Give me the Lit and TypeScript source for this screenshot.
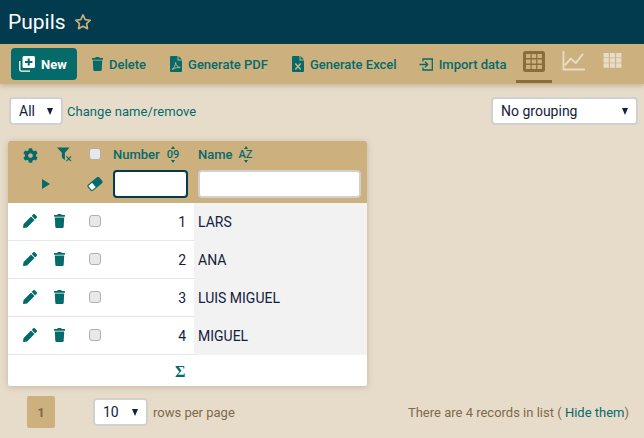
import { LitElement, css, html, svg } from 'lit';
import { customElement, state } from 'lit/decorators.js';

const trash = svg`<path d="M432 32H312l-9.4-18.7A24 24 0 0 0 281.1 0H166.8a23.72 23.72 0 0 0-21.4 13.3L136 32H16A16 16 0 0 0 0 48v32a16 16 0 0 0 16 16h416a16 16 0 0 0 16-16V48a16 16 0 0 0-16-16zM53.2 467a48 48 0 0 0 47.9 45h245.8a48 48 0 0 0 47.9-45L416 128H32z"/>`;
const pencil = svg`<path d="M497.9 142.1l-46.1 46.1c-4.7 4.7-12.3 4.7-17 0l-111-111c-4.7-4.7-4.7-12.3 0-17l46.1-46.1c18.7-18.7 49.1-18.7 67.9 0l60.1 60.1c18.8 18.7 18.8 49.1 0 67.9zM284.2 99.8L21.6 362.4.4 483.9c-2.9 16.4 11.4 30.6 27.8 27.8l121.5-21.3 262.6-262.6c4.7-4.7 4.7-12.3 0-17l-111-111c-4.8-4.7-12.4-4.7-17.1 0z"/>`;
const cog = svg`<path d="M487.4 315.7l-42.6-24.6c4.3-23.2 4.3-47 0-70.2l42.6-24.6c4.9-2.8 7.1-8.6 5.5-14-11.1-35.6-30-67.8-54.7-94.6-3.8-4.1-10-5.1-14.8-2.3L380.8 110c-17.9-15.4-38.5-27.3-60.8-35.1V25.8c0-5.6-3.9-10.5-9.4-11.7-36.7-8.2-74.3-7.8-109.2 0-5.5 1.2-9.4 6.1-9.4 11.7V75c-22.2 7.9-42.8 19.8-60.8 35.1L88.7 85.5c-4.9-2.8-11-1.9-14.8 2.3-24.7 26.7-43.6 58.9-54.7 94.6-1.7 5.4.6 11.2 5.5 14L67.3 221c-4.3 23.2-4.3 47 0 70.2l-42.6 24.6c-4.9 2.8-7.1 8.6-5.5 14 11.1 35.6 30 67.8 54.7 94.6 3.8 4.1 10 5.1 14.8 2.3l42.6-24.6c17.9 15.4 38.5 27.3 60.8 35.1v49.2c0 5.6 3.9 10.5 9.4 11.7 36.7 8.2 74.3 7.8 109.2 0 5.5-1.2 9.4-6.1 9.4-11.7v-49.2c22.2-7.9 42.8-19.8 60.8-35.1l42.6 24.6c4.9 2.8 11 1.9 14.8-2.3 24.7-26.7 43.6-58.9 54.7-94.6 1.5-5.5-.7-11.3-5.6-14.1zM256 336c-44.1 0-80-35.9-80-80s35.9-80 80-80 80 35.9 80 80-35.9 80-80 80z"/>`;

@customElement('app-root')
export class AppRoot extends LitElement {
  @state()
  pupils = ['LARS', 'ANA', 'LUIS MIGUEL', 'MIGUEL'];

  render() {
    return html`
      <header class="c-title">
        <h1>Pupils</h1>
        <svg class="c-star" width="18" height="18" viewBox="0 0 24 24">
          <path d="M12 2.6l2.900 6.200 6.800.8-5 4.600 1.300 6.700-6-3.300-6 3.300 1.300-6.700-5-4.600 6.800-.8z" fill="none" stroke="currentColor" stroke-width="2.200" stroke-linejoin="round"/>
        </svg>
      </header>

      <nav class="c-toolbar">
        <button class="c-new">
          <svg width="16" height="16" viewBox="0 0 16 16">
            <path d="M.8 5v8.500a1.700 1.700 0 0 0 1.700 1.700H11" fill="none" stroke="#fff" stroke-width="1.300"/>
            <path fill-rule="evenodd" fill="#fff" d="M5 0h9.500A1.500 1.500 0 0 1 16 1.500v9a1.500 1.500 0 0 1-1.500 1.500H5a1.500 1.500 0 0 1-1.500-1.500v-9A1.500 1.500 0 0 1 5 0zm3.700 2.500v2.600H6v1.800h2.700v2.600h2V6.900h2.700V5.100h-2.700V2.500z"/>
          </svg>
          New
        </button>
        <a class="c-tool c-tool--delete">
          <svg width="11" height="14" viewBox="0 0 448 512" preserveAspectRatio="none" fill="currentColor">${trash}</svg>
          Delete
        </a>
        <a class="c-tool c-tool--pdf">
          <svg width="12" height="16" viewBox="0 0 12 16">
            <path fill="currentColor" d="M1 0h6.500v4.500H12V15a1 1 0 0 1-1 1H1a1 1 0 0 1-1-1V1a1 1 0 0 1 1-1zM8.500 0L12 3.500H8.500z"/>
            <path fill="none" stroke="#ccb17f" stroke-width="1" d="M2 13.500c2-1 3.500-4 3.600-7 .6 3 2 4.500 4.600 5-2.500-.2-5 .3-8.200 2z"/>
          </svg>
          Generate PDF
        </a>
        <a class="c-tool c-tool--excel">
          <svg width="12" height="16" viewBox="0 0 12 16">
            <path fill="currentColor" d="M1 0h6.500v4.500H12V15a1 1 0 0 1-1 1H1a1 1 0 0 1-1-1V1a1 1 0 0 1 1-1zM8.500 0L12 3.500H8.500z"/>
            <path fill="none" stroke="#ccb17f" stroke-width="1.500" d="M3.300 7.500l5.400 6M8.700 7.500l-5.400 6"/>
          </svg>
          Generate Excel
        </a>
        <a class="c-tool c-tool--import">
          <svg width="14" height="13" viewBox="0 0 14 13" fill="none" stroke="currentColor" stroke-width="1.300">
            <path d="M4 3.500V1h9.300v11H4V9.500M.5 6.500h8M6 3.800l2.700 2.700L6 9.200"/>
          </svg>
          Import data
        </a>
        <div class="c-views">
          <div class="c-view c-view--active">
            <svg width="22" height="21" viewBox="0 0 22 21">
              <rect width="22" height="21" rx="2.500" fill="#8a6d3b"/>
              <g fill="#ccb17f">
                ${[3, 8.5, 14].flatMap((y) => [3, 8.700, 14.400].map((x) => svg`<rect x=${x} y=${y} width="4.500" height="4"/>`))}
              </g>
            </svg>
          </div>
          <div class="c-view c-view--chart">
            <svg width="23" height="20" viewBox="0 0 24 21" fill="none" stroke="#e7dcca" stroke-width="2">
              <path d="M1.500 0v19.500H24"/>
              <path d="M3 15l6-7 5.500 4.500L22 3"/>
            </svg>
          </div>
          <div class="c-view c-view--pivot">
            <svg width="19" height="15" viewBox="0 0 19 16" fill="#e7dcca">
              ${[0, 5.500, 11].flatMap((y) => [0, 6.700, 13.400].map((x) => svg`<rect x=${x} y=${y} width="5.600" height="4.800"/>`))}
            </svg>
          </div>
        </div>
      </nav>

      <section class="c-filters">
        <div class="c-select c-select--all">All<i class="c-caret"></i></div>
        <a class="c-change">Change name/remove</a>
        <div class="c-select c-select--group">No grouping<i class="c-caret"></i></div>
      </section>

      <div class="c-table">
        <div class="c-head">
          <span class="c-icon c-icon--gear">
            <svg width="15" height="15" viewBox="0 0 512 512" fill="currentColor">${cog}</svg>
          </span>
          <span class="c-icon c-icon--filter">
            <svg width="16" height="15" viewBox="0 0 16 15">
              <path fill="currentColor" d="M0 0h13.500L8.400 5.500V13.500L5.200 10.800V5.500z"/>
              <path fill="none" stroke="currentColor" stroke-width="1.200" d="M10 9.500l5 5M15 9.500l-5 5"/>
            </svg>
          </span>
          <span class="c-check c-check--head"></span>
          <span class="c-label">Number <span class="c-sort"><i class="c-up"></i>09<i class="c-down"></i></span></span>
          <span class="c-label c-label--name">Name <span class="c-sort"><i class="c-up"></i>AZ<i class="c-down"></i></span></span>

          <span class="c-icon c-icon--play"><i class="c-play"></i></span>
          <span></span>
          <span class="c-icon c-icon--eraser">
            <svg width="16" height="14" viewBox="0 0 16 14">
              <g transform="rotate(-40 8 7)">
                <rect x="1" y="3.600" width="14" height="6.800" rx="1.500" fill="#fff" stroke="currentColor" stroke-width="1.200"/>
                <path fill="currentColor" d="M6.500 3.600h7a1.500 1.500 0 0 1 1.500 1.500v3.800a1.500 1.500 0 0 1-1.500 1.500h-7z"/>
              </g>
            </svg>
          </span>
          <input class="c-input c-input--focus" />
          <input class="c-input" />
        </div>

        ${this.pupils.map((name, index) => html`
          <div class="c-row">
            <span class="c-icon c-icon--pencil">
              <svg width="14" height="14" viewBox="0 0 512 512" fill="currentColor">${pencil}</svg>
            </span>
            <span class="c-icon c-icon--trash">
              <svg width="11" height="14" viewBox="0 0 448 512" preserveAspectRatio="none" fill="currentColor">${trash}</svg>
            </span>
            <span class="c-check"></span>
            <span class="c-num">${index + 1}</span>
            <span class="c-name">${name}</span>
          </div>
        `)}

        <div class="c-sum">Σ</div>
      </div>

      <footer class="c-footer">
        <span class="c-page">1</span>
        <div class="c-select c-select--size">10<i class="c-caret"></i></div>
        <span class="c-rows">rows per page</span>
        <span class="c-count">There are 4 records in list ( <a>Hide them</a>)</span>
      </footer>
    `;
  }

  static styles = css`
    :host {
      display: block;
      width: 644px;
      height: 438px;
      overflow: hidden;
      background: #e7dcca;
      font-family: Roboto, "Liberation Sans", sans-serif;
      font-size: 14px;
      color: #14213d;
    }

    a {
      color: #056a6a;
    }

    .c-title {
      display: flex;
      align-items: center;
      height: 44px;
      padding-left: 8px;
      background: #023a4e;
      color: #fff;
      box-sizing: border-box;
    }

    .c-title h1 {
      margin: 0;
      width: 56px;
      font-size: 21px;
      font-weight: 400;
      line-height: 44px;
      white-space: nowrap;
    }

    .c-star {
      margin-left: 10px;
      color: #ccb17f;
    }

    .c-toolbar {
      display: flex;
      align-items: center;
      height: 40px;
      background: #ccb17f;
      box-shadow: 0 2px 5px rgba(120, 100, 70, 0.35);
      position: relative;
    }

    .c-new {
      display: flex;
      align-items: center;
      gap: 6px;
      width: 66px;
      height: 32px;
      margin-left: 11px;
      padding: 0 0 0 8px;
      border: 0;
      border-radius: 4px;
      background: #056a6a;
      color: #fff;
      font: 700 13px Roboto, sans-serif;
    }

    .c-tool {
      display: flex;
      align-items: center;
      gap: 6px;
      font-size: 13px;
      font-weight: 500;
      white-space: nowrap;
    }

    .c-tool--delete { margin-left: 15px; }
    .c-tool--pdf { margin-left: 24px; }
    .c-tool--excel { margin-left: 24px; }
    .c-tool--import { margin-left: 22px; }

    .c-views {
      display: flex;
      align-items: flex-start;
      margin-left: 10px;
      height: 40px;
    }

    .c-view {
      display: flex;
      justify-content: center;
      box-sizing: border-box;
      width: 36px;
      height: 39px;
      padding-top: 7px;
    }

    .c-view--active {
      border-bottom: 3px solid #8a6d3b;
    }

    .c-view--chart {
      margin-left: 9px;
      width: 24px;
    }

    .c-view--pivot {
      margin-left: 18px;
      width: 19px;
      padding-top: 9px;
    }

    .c-filters {
      display: flex;
      align-items: center;
      padding: 13px 6px 0 9px;
    }

    .c-select {
      display: flex;
      align-items: center;
      justify-content: space-between;
      box-sizing: border-box;
      height: 28px;
      padding: 0 8px 0 8px;
      background: #fff;
      border: 2px solid #d0d0d0;
      border-radius: 4px;
      font-size: 14px;
    }

    .c-select--all { width: 54px; }
    .c-select--group { width: 147px; margin-left: auto; }
    .c-select--size { width: 55px; }

    .c-caret {
      width: 0;
      height: 0;
      border-left: 3.500px solid transparent;
      border-right: 3.500px solid transparent;
      border-top: 7px solid #14213d;
    }

    .c-change {
      margin-left: 4px;
      font-size: 13px;
      letter-spacing: 0.06px;
    }

    .c-table {
      width: 359px;
      margin: 16px 0 0 8px;
      background: #fff;
      border-radius: 2px;
      box-shadow: 0 1px 6px rgba(120, 100, 70, 0.3);
    }

    .c-head,
    .c-row {
      display: grid;
      grid-template-columns: 38px 26px 40px 82px 1fr;
      align-items: center;
    }

    .c-head {
      grid-template-rows: 29px 28px;
      height: 62px;
      box-sizing: border-box;
      background: #ccb17f;
      border-radius: 2px 2px 0 0;
      align-content: start;
    }

    .c-icon {
      display: flex;
      justify-content: center;
      color: #056a6a;
    }

    .c-icon svg {
      display: block;
    }

    .c-icon--gear { padding: 0 0 1px 6px; }
    .c-icon--filter { padding: 0 0 3px 11px; }
    .c-icon--pencil { padding: 0 0 3px 6px; }
    .c-icon--trash { padding-bottom: 3px; }
    .c-icon--play { justify-content: flex-end; margin-right: -4px; }
    .c-icon--eraser { padding-left: 6px; }

    .c-play {
      width: 0;
      height: 0;
      border-top: 5px solid transparent;
      border-bottom: 5px solid transparent;
      border-left: 8px solid #056a6a;
    }

    .c-check {
      justify-self: center;
      box-sizing: border-box;
      width: 12px;
      height: 12px;
      margin: 0 0 3px 6px;
      background: #e8e8e8;
      border: 1px solid #b0b0b0;
      border-radius: 3px;
    }

    .c-label {
      display: flex;
      align-items: center;
      gap: 7px;
      padding: 0 0 2px 1px;
      color: #056a6a;
      font-size: 13px;
      font-weight: 500;
      white-space: nowrap;
    }

    .c-label--name {
      padding-left: 4px;
      gap: 6px;
    }

    .c-sort {
      display: flex;
      flex-direction: column;
      align-items: center;
      font-size: 11px;
      line-height: 9px;
    }

    .c-up,
    .c-down {
      width: 0;
      height: 0;
      border-left: 2.500px solid transparent;
      border-right: 2.500px solid transparent;
    }

    .c-up {
      border-bottom: 3px solid #056a6a;
      margin-bottom: 1px;
    }

    .c-down {
      border-top: 3px solid #056a6a;
      margin-top: 1px;
    }

    .c-input {
      box-sizing: border-box;
      height: 28px;
      width: 163px;
      margin-left: 4px;
      padding: 0;
      background: #fff;
      border: 2px solid #d0d0d0;
      border-radius: 4px;
      outline: 0;
    }

    .c-input--focus {
      width: 75px;
      margin-left: 1px;
      border-color: #023a4e;
    }

    .c-row {
      height: 38px;
      box-sizing: border-box;
      border-bottom: 1px solid #e6e6e6;
    }

    .c-num {
      align-self: stretch;
      line-height: 38px;
      padding-right: 8px;
      text-align: right;
    }

    .c-name {
      align-self: stretch;
      line-height: 38px;
      padding-left: 4px;
      background: #f2f2f2;
    }

    .c-sum {
      height: 31px;
      box-sizing: border-box;
      padding-left: 167px;
      color: #056a6a;
      font-family: "Liberation Serif", serif;
      font-size: 16px;
      font-weight: 700;
      line-height: 33px;
    }

    .c-footer {
      display: flex;
      align-items: center;
      padding: 10px 15px 0 27px;
    }

    .c-page {
      display: flex;
      align-items: center;
      justify-content: center;
      width: 28px;
      height: 32px;
      background: #ccb17f;
      border-radius: 2px;
      color: #80694a;
      font-size: 13px;
      font-weight: 700;
    }

    .c-select--size {
      margin-left: 38px;
    }

    .c-rows {
      margin-left: 5px;
      color: #80694a;
      font-size: 13px;
    }

    .c-count {
      margin-left: auto;
      color: #80694a;
      font-size: 13px;
    }
  `;
}

declare global {
  interface HTMLElementTagNameMap {
    'app-root': AppRoot;
  }
}
